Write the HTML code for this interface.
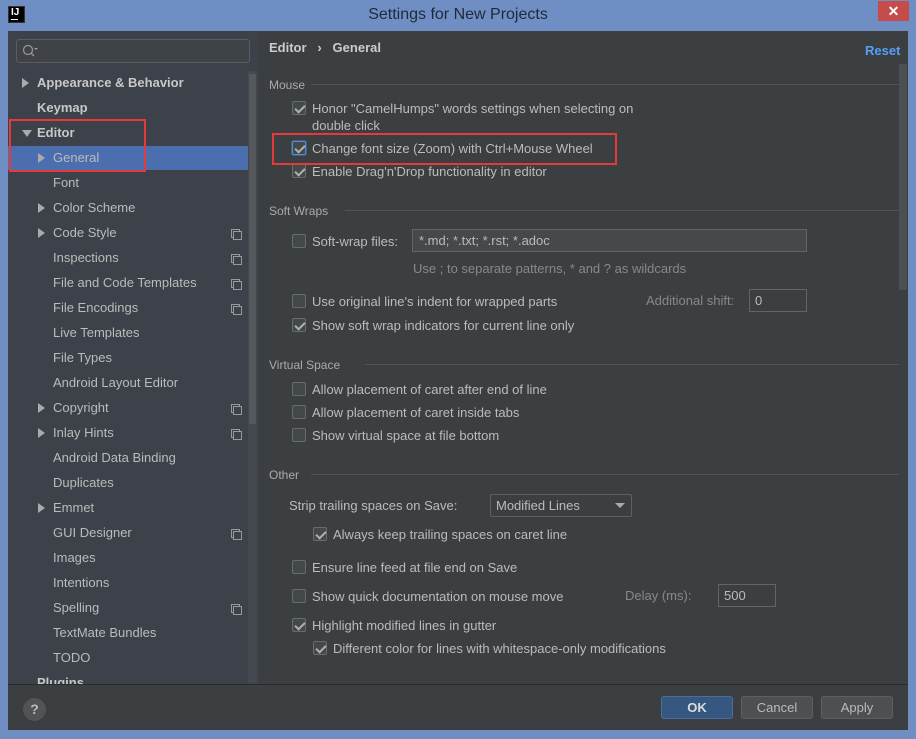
<!DOCTYPE html>
<html><head><meta charset="utf-8"><style>
*{margin:0;padding:0;box-sizing:border-box}
body{width:916px;height:739px;background:#6f8fc4;font-family:"Liberation Sans",sans-serif;font-size:13px;color:#bbbbbb;position:relative;overflow:hidden}
.a{position:absolute;white-space:nowrap}
.t{position:absolute;white-space:nowrap;line-height:16px}
.cb{position:absolute;width:14px;height:14px;border:1px solid #6b6b6b;background:#43494a;border-radius:2px}
.cb.c::after{content:"";position:absolute;left:4px;top:1px;width:4px;height:8px;border:solid #b0b0b0;border-width:0 2px 2px 0;transform:rotate(45deg)}
.hl{position:absolute;height:1px;background:#535353}
.sec{position:absolute;font-size:12px;color:#aaa;line-height:14px}
.ico{position:absolute;width:9px;height:9px;border:1px solid #999;}
.ico::after{content:"";position:absolute;left:1px;top:1px;width:7px;height:7px;border:1px solid #999;background:#3d4149}
.btn{position:absolute;height:23px;border:1px solid #5e6060;background:#4c5052;border-radius:3px;text-align:center;line-height:21px;font-size:13px}
</style></head><body>
<div class="a" style="left:8px;top:6px;width:17px;height:17px;background:#000;color:#fff;font-size:10px;font-weight:bold;line-height:12px;padding-left:2px;border:1px solid #333">IJ<div style="position:absolute;left:2px;top:12px;width:7px;height:1px;background:#fff"></div></div>
<div class="a" style="left:0;width:916px;top:6px;text-align:center;font-size:16px;color:#1e2a3a">Settings for New Projects</div>
<div class="a" style="left:878px;top:1px;width:31px;height:20px;background:#c64c4c;color:#fff;text-align:center;font-size:14px;line-height:20px;font-weight:bold">✕</div>
<div class="a" style="left:8px;top:31px;width:250px;height:653px;background:#3d4149"></div>
<div class="a" style="left:258px;top:31px;width:650px;height:653px;background:#3c3f41"></div>
<div class="a" style="left:8px;top:684px;width:900px;height:46px;background:#3c3f41;border-top:1px solid #2b2b2b"></div>
<div class="a" style="left:248px;top:71px;width:9px;height:612px;background:#45494f"></div>
<div class="a" style="left:249px;top:74px;width:7px;height:350px;background:#55595e"></div>
<div class="a" style="left:16px;top:39px;width:234px;height:24px;border:1px solid #5b5e60;border-radius:3px;background:#3f4347"></div>
<svg class="a" style="left:22px;top:44px" width="16" height="14"><circle cx="6" cy="6" r="4.5" fill="none" stroke="#999" stroke-width="1.2"/><line x1="9" y1="9" x2="12" y2="12" stroke="#999" stroke-width="1.3"/><path d="M12 4h4l-2 2z" fill="#999"/></svg>
<div class="a" style="left:8px;top:146px;width:240px;height:24px;background:#4b6eaf"></div>
<div id="tree"></div>
<div class="a" style="left:9px;top:119px;width:137px;height:53px;border:2px solid #e43a3a"></div>
<div class="t" style="left:269px;top:40px;font-weight:bold;color:#ccc">Editor &nbsp;&nbsp;›&nbsp;&nbsp; General</div>
<div class="t" style="left:865px;top:43px;font-weight:bold;color:#589df6">Reset</div>
<div class="a" style="left:899px;top:64px;width:8px;height:226px;background:#4d5052"></div>
<div id="right"></div>
<div class="a" style="left:272px;top:133px;width:345px;height:32px;border:2px solid #e43a3a"></div>
<div class="a" style="left:490px;top:494px;width:142px;height:23px;border:1px solid #5e6060;border-radius:2px;background:#3c3f41"><span style="position:absolute;left:5px;top:3px">Modified Lines</span><span style="position:absolute;right:6px;top:8px;border:5px solid transparent;border-top-color:#aaa;border-bottom:0"></span></div>
<div class="a" style="left:412px;top:229px;width:395px;height:23px;border:1px solid #646464;background:#45494a;padding:3px 6px">*.md; *.txt; *.rst; *.adoc</div>
<div class="a" style="left:749px;top:289px;width:58px;height:23px;border:1px solid #646464;padding:3px 5px">0</div>
<div class="a" style="left:718px;top:584px;width:58px;height:23px;border:1px solid #646464;padding:3px 5px">500</div>
<div class="a" style="left:23px;top:698px;width:23px;height:23px;border-radius:50%;background:#505456;color:#bbb;text-align:center;line-height:23px;font-weight:bold;font-size:14px">?</div>
<div class="btn" style="left:661px;top:696px;width:72px;background:#365880;border-color:#4a6f9d;font-weight:bold;color:#ddd">OK</div>
<div class="btn" style="left:741px;top:696px;width:72px">Cancel</div>
<div class="btn" style="left:821px;top:696px;width:72px">Apply</div>
<script>
var T=[["Appearance & Behavior",37,1,1],["Keymap",37,0,1],["Editor",37,2,1],["General",53,1,0],["Font",53,0,0],["Color Scheme",53,1,0],["Code Style",53,1,0,1],["Inspections",53,0,0,1],["File and Code Templates",53,0,0,1],["File Encodings",53,0,0,1],["Live Templates",53,0,0],["File Types",53,0,0],["Android Layout Editor",53,0,0],["Copyright",53,1,0,1],["Inlay Hints",53,1,0,1],["Android Data Binding",53,0,0],["Duplicates",53,0,0],["Emmet",53,1,0],["GUI Designer",53,0,0,1],["Images",53,0,0],["Intentions",53,0,0],["Spelling",53,0,0,1],["TextMate Bundles",53,0,0],["TODO",53,0,0],["Plugins",37,0,1]];
var h="";T.forEach(function(r,i){var y=75+i*25;
if(r[2]==1)h+='<div class="a" style="left:'+(r[1]-15)+'px;top:'+(y+3)+'px;border:5px solid transparent;border-left:7px solid #aaa;border-right:0"></div>';
if(r[2]==2)h+='<div class="a" style="left:'+(r[1]-15)+'px;top:'+(y+5)+'px;border:5px solid transparent;border-top:7px solid #aaa;border-bottom:0"></div>';
h+='<div class="t" style="left:'+r[1]+'px;top:'+y+'px;'+(r[3]?'font-weight:bold;color:#c8c8c8;':'')+(i==24?'clip-path:inset(0 0 7px 0);':'')+'">'+r[0].replace("&","&amp;")+'</div>';
if(r[4])h+='<div class="ico" style="left:231px;top:'+(y+4)+'px"></div>';});
document.getElementById("tree").innerHTML=h;
var R=[["s","Mouse",84],["c","Honor \"CamelHumps\" words settings when selecting on",108,292,1],["t","double click",125,312],["c","Change font size (Zoom) with Ctrl+Mouse Wheel",148,292,1],["c","Enable Drag'n'Drop functionality in editor",171,292,1],
["s","Soft Wraps",210],["c","Soft-wrap files:",241,292,0],["t","Use ; to separate patterns, * and ? as wildcards",268,413,"#888"],["c","Use original line's indent for wrapped parts",301,292,0],["t","Additional shift:",300,646,"#888"],["c","Show soft wrap indicators for current line only",325,292,1],
["s","Virtual Space",364],["c","Allow placement of caret after end of line",389,292,0],["c","Allow placement of caret inside tabs",412,292,0],["c","Show virtual space at file bottom",435,292,0],
["s","Other",474],["t","Strip trailing spaces on Save:",505,289],["c","Always keep trailing spaces on caret line",534,313,1],["c","Ensure line feed at file end on Save",567,292,0],["c","Show quick documentation on mouse move",596,292,0],["t","Delay (ms):",595,625,"#888"],["c","Highlight modified lines in gutter",625,292,1],["c","Different color for lines with whitespace-only modifications",648,313,1]];
h="";R.forEach(function(r){
if(r[0]=="s"){h+='<div class="sec" style="left:269px;top:'+(r[2]-6)+'px">'+r[1]+'</div>';var w=r[1].length*6.8+8;h+='<div class="hl" style="left:'+(269+w)+'px;top:'+r[2]+'px;width:'+(630-w)+'px"></div>';}
else if(r[0]=="c"){h+='<div class="cb'+(r[4]?' c':'')+'" style="left:'+r[3]+'px;top:'+(r[2]-7)+'px'+(r[2]==148?';border-color:#5a8ccf;box-shadow:0 0 0 1px #3d6185':'')+'"></div><div class="t" style="left:'+(r[3]+20)+'px;top:'+(r[2]-7)+'px">'+r[1].replace(/"/g,"&quot;")+'</div>';}
else h+='<div class="t" style="left:'+r[3]+'px;top:'+(r[2]-7)+'px;'+(r[4]?'color:'+r[4]:'')+'">'+r[1]+'</div>';});
document.getElementById("right").innerHTML=h;
</script>
</body></html>
